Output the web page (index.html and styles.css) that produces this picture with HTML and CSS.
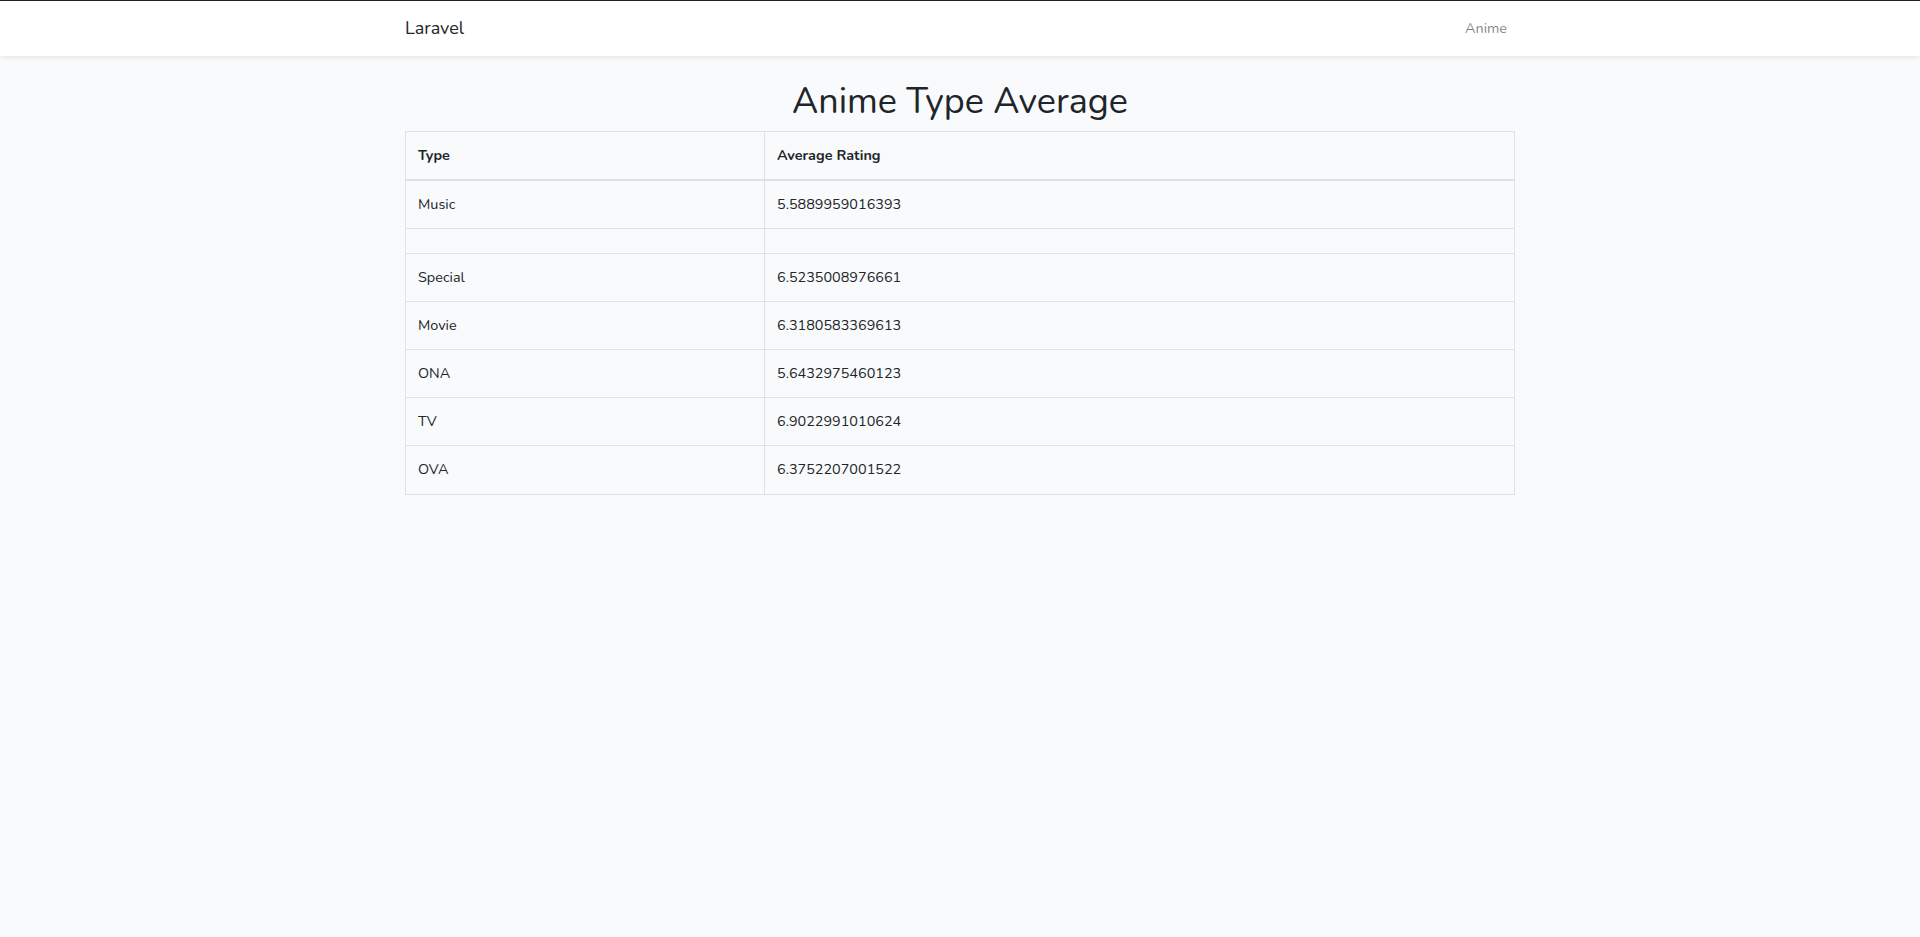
FILE: index.html
```html
<!DOCTYPE html>
<html lang="en">
<head>
<meta charset="utf-8">
<title>Laravel</title>
<link rel="stylesheet" href="styles.css">
</head>
<body>
<div class="app">
  <nav class="navbar">
    <div class="container nav-inner">
      <a class="brand" href="#">Laravel</a>
      <ul class="nav-right">
        <li><a class="nav-link" href="#">Anime</a></li>
      </ul>
    </div>
  </nav>
  <main class="main">
    <div class="container">
      <h1 class="title">Anime Type Average</h1>
      <table class="table">
        <thead>
          <tr><th class="col-type">Type</th><th>Average Rating</th></tr>
        </thead>
        <tbody>
          <tr><td>Music</td><td>5.5889959016393</td></tr>
          <tr><td></td><td></td></tr>
          <tr><td>Special</td><td>6.5235008976661</td></tr>
          <tr><td>Movie</td><td>6.3180583369613</td></tr>
          <tr><td>ONA</td><td>5.6432975460123</td></tr>
          <tr><td>TV</td><td>6.9022991010624</td></tr>
          <tr><td>OVA</td><td>6.3752207001522</td></tr>
        </tbody>
      </table>
    </div>
  </main>
</div>
</body>
</html>
```
FILE: styles.css
```css
* { box-sizing: border-box; }
html, body { margin: 0; padding: 0; }
body {
  background: #f8fafc;
  color: #212529;
  font-family: "Nunito", "Lato", "Open Sans", sans-serif;
  font-size: 14.4px;
  line-height: 1.6;
  border-top: 1px solid #1e1e1e;
}
.container {
  width: 1140px;
  margin: 0 auto;
  padding: 0 15px;
}
.navbar {
  background: #fff;
  box-shadow: 0 2px 4px rgba(0,0,0,0.075);
  padding: 8px 16px;
  position: relative;
}
.nav-inner {
  display: flex;
  align-items: center;
  justify-content: space-between;
  height: 39px;
}
.brand {
  color: #212529;
  text-decoration: none;
  font-size: 18px;
  line-height: 28.8px;
}
.nav-right {
  list-style: none;
  margin: 0;
  padding: 0;
  display: flex;
}
.nav-link {
  display: block;
  padding: 8px;
  color: rgba(0,0,0,0.5);
  text-decoration: none;
  font-size: 14.4px;
}
.main {
  padding: 24px 0;
}
.title {
  text-align: center;
  font-size: 36px;
  font-weight: 400;
  line-height: 1.2;
  margin: 0 0 8px;
}
.table {
  width: 100%;
  border-collapse: collapse;
  border: 1px solid #dee2e6;
}
.table th, .table td {
  border: 1px solid #dee2e6;
  padding: 12px;
  text-align: left;
  vertical-align: top;
  height: 48px;
}
.table tbody td:empty { height: 25px; }
.table thead th {
  font-weight: 700;
  border-bottom: 2px solid #dee2e6;
  vertical-align: bottom;
}
.col-type { width: 359px; }
```
